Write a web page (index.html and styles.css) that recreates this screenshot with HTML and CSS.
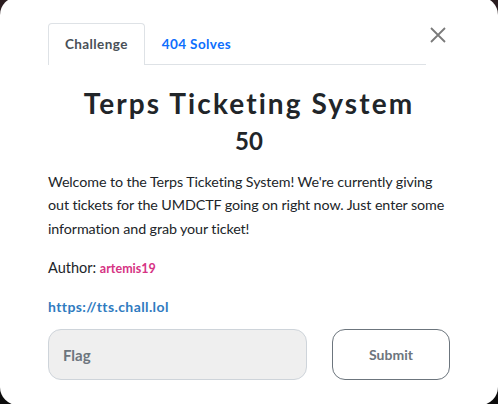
FILE: index.html
```html
<!DOCTYPE html>
<html>
<head>
<meta charset="utf-8">
<link rel="stylesheet" href="styles.css">
</head>
<body>
<div class="modal">
  <div class="head">
    <ul class="tabs">
      <li class="tab active">Challenge</li>
      <li class="tab">404 Solves</li>
    </ul>
    <button class="close" aria-label="Close">
      <svg width="16" height="16" viewBox="0 0 16 16"><path d="M1 1L15 15M15 1L1 15" stroke="#7a7a7a" stroke-width="1.8" fill="none"/></svg>
    </button>
  </div>
  <h2 class="title">Terps Ticketing System</h2>
  <h3 class="value">50</h3>
  <p class="desc">Welcome to the Terps Ticketing System! We're currently giving out tickets for the UMDCTF going on right now. Just enter some information and grab your ticket!</p>
  <p class="author">Author: <span class="author-name">artemis19</span></p>
  <p class="link-row"><a class="link" href="#">https://tts.chall.lol</a></p>
  <div class="submit-row">
    <input class="flag" type="text" placeholder="Flag">
    <button class="submit">Submit</button>
  </div>
</div>
</body>
</html>
```
FILE: styles.css
```css
html, body {
  margin: 0;
  padding: 0;
}
body {
  width: 498px;
  height: 404px;
  overflow: hidden;
  background: linear-gradient(#2b1d20, #0c0c0c);
  font-family: "Lato", "Noto Sans", sans-serif;
  color: #212529;
}
.modal {
  box-sizing: border-box;
  width: 498px;
  height: 408px;
  margin-top: -3px;
  background: #fff;
  border-radius: 18px;
  padding: 26px 48px 0 48px;
}
.head {
  display: flex;
  align-items: flex-start;
}
.tabs {
  flex: 1;
  display: flex;
  list-style: none;
  margin: 0;
  padding: 0;
  border-bottom: 1px solid #dee2e6;
}
.tab {
  padding: 0 16px;
  height: 40px;
  line-height: 40px;
  font-size: 13.5px;
  letter-spacing: 0.4px;
  font-weight: 700;
  color: #0d6efd;
  border: 1px solid transparent;
  border-bottom: none;
  border-radius: 4px 4px 0 0;
  margin-bottom: -1px;
}
.tab.active {
  color: #495057;
  border-color: #dee2e6;
  background: #fff;
  height: 41px;
}
.close {
  width: 24px;
  height: 24px;
  margin-top: 0;
  padding: 0 0 0 4px;
  border: none;
  background: none;
  display: flex;
  align-items: center;
  justify-content: flex-start;
}
.title {
  margin: 20px 0 0;
  text-align: center;
  font-size: 28px;
  font-weight: 700;
  letter-spacing: 2.1px;
  line-height: 36px;
}
.value {
  margin: 5px 0 0;
  text-align: center;
  font-size: 24px;
  font-weight: 700;
  line-height: 30px;
}
.desc {
  margin: 14px 0 0;
  font-size: 14.3px;
  letter-spacing: -0.1px;
  line-height: 23.4px;
}
.author {
  margin: 16px 0 0;
  font-size: 14.5px;
  line-height: 23px;
}
.author-name {
  color: #d63384;
  font-size: 12.5px;
  font-weight: 700;
}
.link-row {
  margin: 17px 0 0;
  font-size: 14px;
  letter-spacing: 0.4px;
  line-height: 20px;
}
.link {
  color: #2f7bbf;
  font-weight: 700;
  text-decoration: none;
}
.submit-row {
  display: flex;
  gap: 25px;
  margin-top: 12px;
}
.flag {
  box-sizing: border-box;
  width: 259px;
  height: 51px;
  border: 1px solid #ced4da;
  border-radius: 13px;
  background: #efefef;
  padding: 0 14px;
  font-family: inherit;
  font-size: 15px;
  font-weight: 700;
  outline: none;
}
.flag::placeholder {
  color: #6c757d;
}
.submit {
  box-sizing: border-box;
  width: 118px;
  height: 51px;
  border: 1px solid #6c757d;
  border-radius: 13px;
  background: #fff;
  color: #6c757d;
  font-family: inherit;
  font-size: 14px;
  font-weight: 700;
}
```
